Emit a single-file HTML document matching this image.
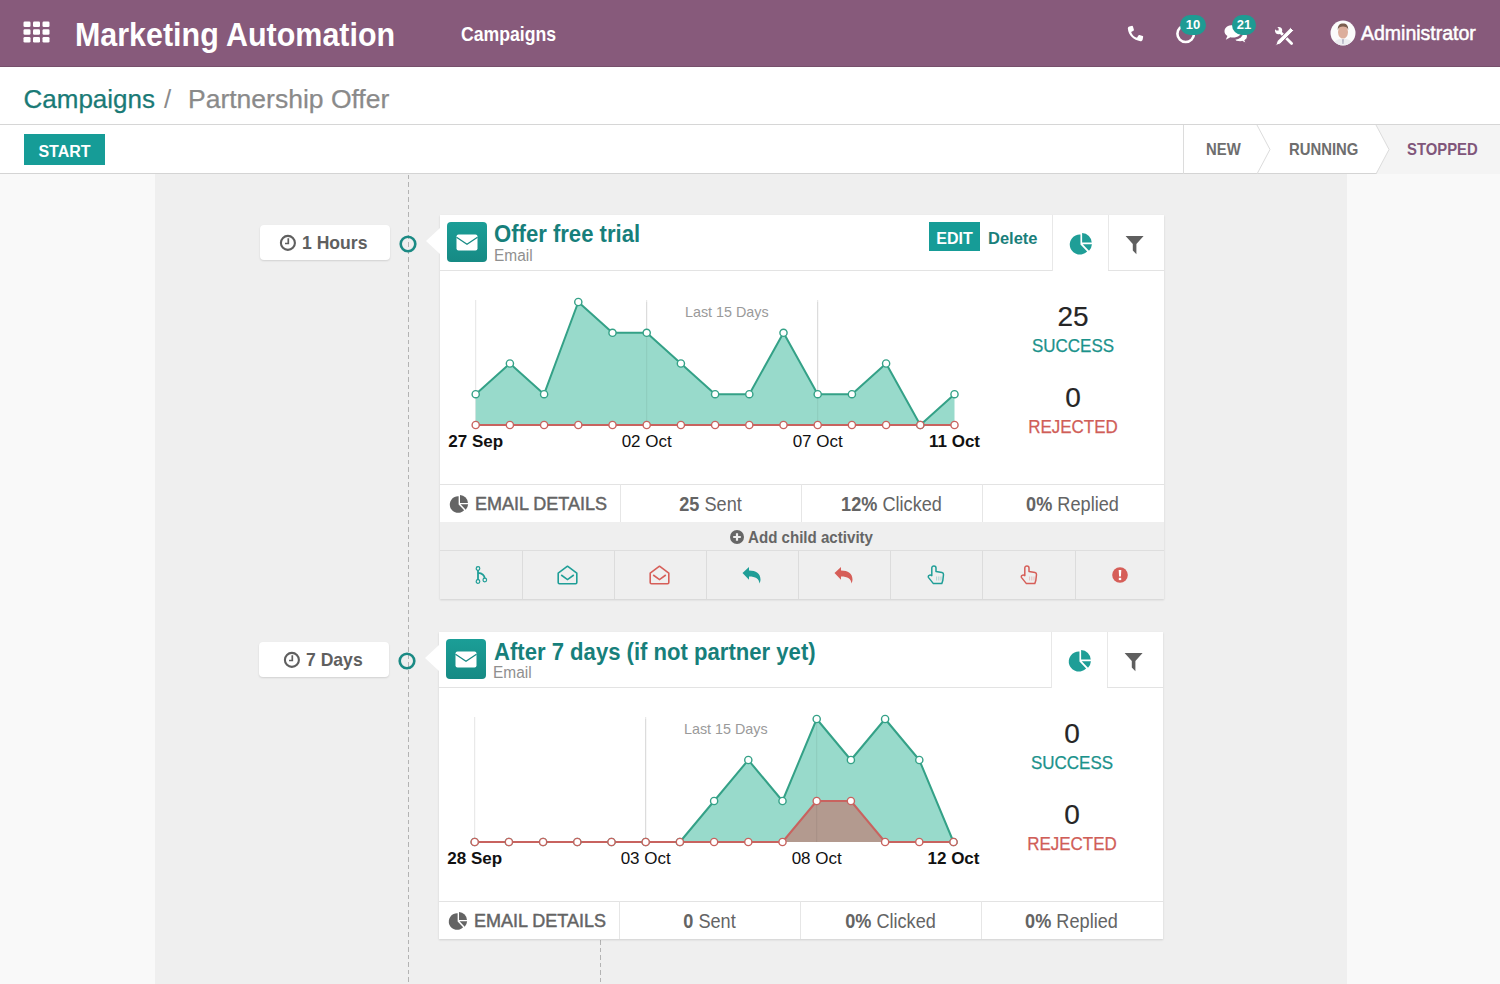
<!DOCTYPE html>
<html><head><meta charset="utf-8">
<style>
*{box-sizing:border-box;margin:0;padding:0}
html,body{width:1500px;height:984px;overflow:hidden;background:#f9f9f9;font-family:"Liberation Sans",sans-serif}
.abs{position:absolute}
svg.abs{overflow:visible}
#nav{position:absolute;left:0;top:0;width:1500px;height:67px;background:#875a7b;border-bottom:1px solid #76506b}
.wt{color:#fff;white-space:nowrap}
#cp{position:absolute;left:0;top:67px;width:1500px;height:107px;background:#fff;border-bottom:1px solid #d4d4d4}
#center{position:absolute;left:155px;top:174px;width:1192px;height:810px;background:#efefef}
.tl{position:absolute;width:1px;background:repeating-linear-gradient(to bottom,#b3b3b3 0,#b3b3b3 4.5px,transparent 4.5px,transparent 7.5px)}
.badge{position:absolute;width:130px;height:35px;background:#fff;border-radius:4px;box-shadow:0 1px 2px rgba(0,0,0,.13);color:#5f5f5f;font-weight:bold;font-size:17.5px;white-space:nowrap}
.dot{position:absolute;width:18px;height:18px;border:3px solid #1a8a84;border-radius:50%;background:#efefef}
.card{position:absolute;width:724px;background:#fff;box-shadow:0 1px 2px rgba(0,0,0,.13)}
.arrow{position:absolute;width:0;height:0;border-top:13px solid transparent;border-bottom:13px solid transparent;border-right:14px solid #fff}
.hdr{position:absolute;left:0;top:0;width:612px;height:56px;border-bottom:1px solid #e2e2e2}
.tab1{position:absolute;left:612px;top:0;width:56px;height:56px;border-left:1px solid #e2e2e2}
.tab2{position:absolute;left:668px;top:0;width:56px;height:56px;border-left:1px solid #e2e2e2;border-bottom:1px solid #e2e2e2}
.micon{position:absolute;width:40px;height:40px;border-radius:4px;background:linear-gradient(to bottom,#1b9e97,#168a84)}
.title{position:absolute;color:#177f7b;font-weight:bold;font-size:22px;line-height:26px;white-space:nowrap}
.sub{position:absolute;color:#8f8f8f;font-size:15.5px;line-height:18px;white-space:nowrap}
.det{position:absolute;height:38px;border-top:1px solid #e2e2e2;background:#fff}
.dc{position:absolute;top:0;height:37px;line-height:37px;border-left:1px solid #e2e2e2;color:#646464;font-size:19px;text-align:center;white-space:nowrap}
.xl{position:absolute;width:80px;text-align:center;font-size:17px;line-height:20px;color:#111;white-space:nowrap}
.l15{position:absolute;font-size:14.3px;line-height:16px;color:#9a9a9a;white-space:nowrap}
.stat{position:absolute;width:130px;text-align:center;white-space:nowrap}
.num{font-size:27px;line-height:30px;color:#262626;-webkit-text-stroke:0.2px #262626}
.lbl{font-size:17px;line-height:20px}
.add{position:absolute;background:#efefef;height:28px;border-bottom:1px solid #dedede}
.ic{position:absolute;top:0;height:49px;border-left:1px solid #dedede;background:#efefef}

</style></head><body>
<div id="nav">
  <svg class="abs" style="left:23px;top:21px" width="28" height="23" viewBox="0 0 28 23">
    <g fill="#fff">
      <rect x="0.5" y="0.5" width="7" height="5.5" rx="1.3"/><rect x="10" y="0.5" width="7" height="5.5" rx="1.3"/><rect x="19.5" y="0.5" width="7" height="5.5" rx="1.3"/>
      <rect x="0.5" y="8.2" width="7" height="5.5" rx="1.3"/><rect x="10" y="8.2" width="7" height="5.5" rx="1.3"/><rect x="19.5" y="8.2" width="7" height="5.5" rx="1.3"/>
      <rect x="0.5" y="16" width="7" height="5.5" rx="1.3"/><rect x="10" y="16" width="7" height="5.5" rx="1.3"/><rect x="19.5" y="16" width="7" height="5.5" rx="1.3"/>
    </g>
  </svg>
  <div id="appname" class="abs wt" style="left:75px;top:14.5px;font-size:34px;font-weight:bold;line-height:38px;transform:scaleX(0.895);transform-origin:0 0">Marketing Automation</div>
  <div id="navcamp" class="abs wt" style="left:461px;top:23px;font-size:19.5px;line-height:22px;font-weight:bold;transform:scaleX(0.905);transform-origin:0 0">Campaigns</div>
  <!-- phone -->
  <svg class="abs" style="left:1127px;top:25px" width="17" height="17" viewBox="0 0 16 16">
    <path fill="#fff" d="M2.2,1.3 L4.8,0.8 C5.2,0.8 5.5,1 5.6,1.3 L6.5,4.4 C6.6,4.8 6.4,5.2 6.1,5.4 L3.9,6.6 C4.7,9.2 6.8,11.3 9.4,12.1 L10.7,9.9 C10.9,9.6 11.3,9.4 11.7,9.5 L14.8,10.4 C15.1,10.5 15.3,10.8 15.2,11.2 L14.7,13.8 C14.5,14.7 13.6,15.3 12.6,15.2 C6.3,14.7 1.3,9.7 0.8,3.4 C0.7,2.4 1.3,1.5 2.2,1.3 Z"/>
  </svg>
  <!-- activity clock -->
  <svg class="abs" style="left:1170px;top:18px" width="32" height="32" viewBox="0 0 32 32">
    <circle cx="15.7" cy="15.7" r="8.3" fill="none" stroke="#fff" stroke-width="2.6"/>
  </svg>
  <div class="abs" style="left:1180px;top:15px;width:26px;height:20px;border-radius:10px;background:#1e9b93"></div>
  <div id="b10" class="abs" style="left:1180px;top:15px;width:26px;height:20px;line-height:20px;text-align:center;color:#fff;font-weight:bold;font-size:13px">10</div>
  <!-- comments -->
  <svg class="abs" style="left:1222px;top:22px" width="28" height="24" viewBox="0 0 28 24">
    <path fill="#fff" d="M11,3 C5.8,3 2.5,5.8 2.5,9.2 C2.5,11.2 3.6,12.9 5.4,14 L3.8,17.8 L8.4,15.3 C9.2,15.5 10.1,15.6 11,15.6 C16.2,15.6 19.5,12.8 19.5,9.3 C19.5,5.8 16.2,3 11,3 Z"/>
    <path fill="#fff" stroke="#875a7b" stroke-width="1.2" d="M20.8,10.2 C20.8,14.3 16.8,17.2 11.8,17.3 C12.9,18.8 15.2,19.8 17.8,19.8 C18.6,19.8 19.3,19.7 20,19.5 L24.6,21.8 L23,18.4 C24.6,17.4 25.6,16 25.6,14.4 C25.6,12.4 23.8,10.8 20.8,10.2 Z"/>
  </svg>
  <div class="abs" style="left:1232px;top:15px;width:24px;height:20px;border-radius:10px;background:#1e9b93"></div>
  <div id="b21" class="abs" style="left:1232px;top:15px;width:24px;height:20px;line-height:20px;text-align:center;color:#fff;font-weight:bold;font-size:13px">21</div>
  <!-- tools -->
  <svg class="abs" style="left:1274px;top:26px" width="21" height="21" viewBox="0 0 21 21">
    <line x1="5.5" y1="5.5" x2="17.6" y2="17.6" stroke="#fff" stroke-width="2.8" stroke-linecap="round"/>
    <circle cx="4.6" cy="4.6" r="3.6" fill="#fff"/>
    <path d="M0.6,2.8 L2.8,0.6 L4.6,2.4 L4.6,4.6 L2.4,4.6 Z" fill="#875a7b"/>
    <path d="M16.6,1.6 L19.6,4.6 L6.2,18 L1.6,19.6 L3.2,15 Z" fill="#fff" stroke="#875a7b" stroke-width="1"/>
  </svg>
  <!-- avatar -->
  <svg class="abs" style="left:1330px;top:20px" width="26" height="26" viewBox="0 0 26 26">
    <defs><clipPath id="av"><circle cx="13" cy="13" r="12.3"/></clipPath></defs>
    <circle cx="13" cy="13" r="12.5" fill="#fbfbfb"/>
    <g clip-path="url(#av)">
      <path d="M3,26 C3,20.5 7.5,19 13,19 C18.5,19 23,20.5 23,26 Z" fill="#ececf0"/>
      <ellipse cx="13" cy="12" rx="5" ry="6.6" fill="#dcae9c"/>
      <path d="M7.8,10 C7.5,5.2 9.8,3.4 13,3.4 C16.2,3.4 18.5,5.2 18.2,10 C17.4,7.4 15.6,6.6 13,6.6 C10.4,6.6 8.6,7.4 7.8,10 Z" fill="#7a5e4e"/>
      <path d="M12.3,19.3 L13.7,19.3 L13.4,24 L12.6,24 Z" fill="#9a9ab0"/>
    </g>
  </svg>
  <div id="admin" class="abs wt" style="left:1361px;top:22px;font-size:19.5px;line-height:22px;-webkit-text-stroke:0.5px #fff">Administrator</div>
</div>
<div id="cp">
  <div id="bc1" class="abs" style="left:23.5px;top:17px;-webkit-text-stroke:0.25px #1a7a76;font-size:26px;line-height:30px;color:#1a7a76;white-space:nowrap">Campaigns</div>
  <div id="bcs" class="abs" style="left:164px;top:17px;font-size:26px;line-height:30px;color:#8a8a8a">/</div>
  <div id="bc2" class="abs" style="left:188px;top:17px;-webkit-text-stroke:0.25px #8a8a8a;font-size:26.5px;line-height:30px;color:#8a8a8a;white-space:nowrap">Partnership Offer</div>
  <div class="abs" style="left:0;top:57px;width:1500px;height:1px;background:#d6d6d6"></div>
  <div class="abs" style="left:24px;top:67px;width:81px;height:31px;background:#169c97"></div>
  <div id="start" class="abs wt" style="left:24px;top:68.5px;width:81px;height:31px;line-height:31px;text-align:center;font-size:16px;font-weight:bold">START</div>
  <!-- statusbar -->
  <svg class="abs" style="left:1183px;top:58px" width="317" height="49" viewBox="0 0 317 49">
    <polygon points="193,0 317,0 317,49 193,49 206,24.5" fill="#f4f4f4"/>
    <line x1="0.5" y1="0" x2="0.5" y2="49" stroke="#dcdcdc" stroke-width="1"/>
    <polyline points="74,0 87,24.5 74,49" fill="none" stroke="#dcdcdc" stroke-width="1"/>
    <polyline points="193,0 206,24.5 193,49" fill="none" stroke="#dcdcdc" stroke-width="1"/>
  </svg>
  <div id="st_new" class="abs" style="left:1206px;top:72.5px;transform:scaleX(0.9);transform-origin:0 0;font-size:16.5px;font-weight:bold;line-height:18px;color:#6e6e6e">NEW</div>
  <div id="st_run" class="abs" style="left:1288.5px;top:72.5px;transform:scaleX(0.9);transform-origin:0 0;font-size:16.5px;font-weight:bold;line-height:18px;color:#6e6e6e">RUNNING</div>
  <div id="st_stop" class="abs" style="left:1406.5px;top:72.5px;transform:scaleX(0.9);transform-origin:0 0;font-size:16.5px;font-weight:bold;line-height:18px;color:#80567a">STOPPED</div>
</div>
<div id="center"></div>
<div class="tl" style="left:408px;top:175px;height:809px"></div>
<div class="tl" style="left:600px;top:940px;height:44px"></div>
<div class="badge" style="left:260px;top:225px"></div>
<svg class="abs" style="left:278.7px;top:234px" width="18" height="18" viewBox="0 0 18 18"><circle cx="8.9" cy="8.9" r="7" fill="none" stroke="#5f5f5f" stroke-width="2.1"/><path d="M9.3,4.3 L9.3,9.5 L6,9.5" fill="none" stroke="#5f5f5f" stroke-width="1.7"/></svg>
<div class="abs" style="left:301.7px;top:232px;font-size:18.5px;line-height:22px;font-weight:bold;color:#5f5f5f;white-space:nowrap;transform:scaleX(0.95);transform-origin:0 0;">1 Hours</div>
<svg class="abs" style="left:397.5px;top:233.5px" width="20" height="20" viewBox="0 0 20 20"><circle cx="10" cy="10" r="7.3" fill="none" stroke="#1b8a84" stroke-width="2.6"/></svg>
<div class="card" style="left:440px;top:215px;height:384px;border-radius:3px 3px 0 0 0 0"></div>
<div class="arrow" style="left:426px;top:228px"></div>
<div class="abs" style="left:440px;top:270px;width:612px;height:1px;background:#e3e3e3"></div>
<div class="abs" style="left:1052px;top:215px;width:1px;height:56px;background:#e8e8e8"></div>
<div class="abs" style="left:1108px;top:215px;width:1px;height:56px;background:#e8e8e8"></div>
<div class="abs" style="left:1108px;top:270px;width:56px;height:1px;background:#e3e3e3"></div>
<div class="micon" style="left:447px;top:222px"></div>
<svg class="abs" style="left:456px;top:234px" width="22" height="17" viewBox="0 0 22 17"><rect x="0.5" y="0.5" width="21" height="16" rx="2" fill="#fff"/><path d="M0.5,3.2 L11,10.2 L21.5,3.2" fill="none" stroke="#168a84" stroke-width="1.3"/></svg>
<div class="abs" style="left:494px;top:220.5px;font-size:23.5px;line-height:26px;font-weight:bold;color:#177f7b;white-space:nowrap;transform:scaleX(0.94);transform-origin:0 0;">Offer free trial</div>
<div class="abs" style="left:493.5px;top:245.5px;font-size:16px;line-height:19px;font-weight:normal;color:#8f8f8f;white-space:nowrap;transform:scaleX(0.965);transform-origin:0 0;">Email</div>
<div class="abs" style="left:929px;top:222px;width:51px;height:29px;background:#169c97"></div>
<div class="abs" style="left:929px;top:222px;width:51px;height:29px;line-height:29px;text-align:center;color:#fff;font-weight:bold;font-size:16px;padding-top:1.5px">EDIT</div>
<div class="abs" style="left:988px;top:227.7px;line-height:20px;color:#1a7f7b;font-weight:bold;font-size:16.5px">Delete</div>
<svg class="abs" style="left:1070px;top:232.5px" width="23" height="23" viewBox="0 0 22 22"><path fill="#1f9e97" d="M10,1.5 L10,11 L16.4,17.6 A9.6,9.6 0 1 1 10,1.5 Z"/><path fill="#1f9e97" d="M11.6,0 A9.4,9.4 0 0 1 20.8,9.2 L11.6,9.2 Z"/><path fill="#1f9e97" d="M12.2,10.8 L21,10.8 A9.8,9.8 0 0 1 18.2,17 Z"/></svg>
<svg class="abs" style="left:1125px;top:235px" width="19" height="20" viewBox="0 0 19 20"><path fill="#5f5f5f" d="M0.6,1 L18.6,1 L11.4,9 L11.4,19.2 L7.8,15.4 L7.8,9 Z"/></svg>
<div class="stat num" style="left:1008px;top:301px;font-size:28px;line-height:31px">25</div>
<div class="stat lbl" style="left:1008px;top:336px;color:#1b928b;font-size:17.5px;transform:scaleX(0.97);-webkit-text-stroke:0.25px #1b928b">SUCCESS</div>
<div class="stat num" style="left:1008px;top:382px;font-size:28px;line-height:31px">0</div>
<div class="stat lbl" style="left:1008px;top:416.5px;color:#d05e58;font-size:17.5px;transform:scaleX(0.97);-webkit-text-stroke:0.25px #d05e58">REJECTED</div>
<div class="abs" style="left:440px;top:484px;width:724px;height:1px;background:#e3e3e3"></div>
<div class="abs" style="left:620px;top:484px;width:1px;height:38px;background:#e6e6e6"></div>
<div class="abs" style="left:801px;top:484px;width:1px;height:38px;background:#e6e6e6"></div>
<div class="abs" style="left:982px;top:484px;width:1px;height:38px;background:#e6e6e6"></div>
<svg class="abs" style="left:450px;top:495px" width="19" height="19" viewBox="0 0 22 22"><path fill="#646464" d="M10,1.5 L10,11 L16.4,17.6 A9.6,9.6 0 1 1 10,1.5 Z"/><path fill="#646464" d="M11.6,0 A9.4,9.4 0 0 1 20.8,9.2 L11.6,9.2 Z"/><path fill="#646464" d="M12.2,10.8 L21,10.8 A9.8,9.8 0 0 1 18.2,17 Z"/></svg>
<div class="abs" style="left:475px;top:493.3px;font-size:18px;line-height:22px;font-weight:normal;color:#646464;white-space:nowrap;-webkit-text-stroke:0.45px #646464;">EMAIL DETAILS</div>
<div class="dc" style="left:620px;width:181px;border-left:none;line-height:22px;top:492.5px;height:22px;font-size:19.5px;transform:scaleX(0.93)"><b>25</b> Sent</div>
<div class="dc" style="left:801px;width:181px;border-left:none;line-height:22px;top:492.5px;height:22px;font-size:19.5px;transform:scaleX(0.93)"><b>12%</b> Clicked</div>
<div class="dc" style="left:982px;width:181px;border-left:none;line-height:22px;top:492.5px;height:22px;font-size:19.5px;transform:scaleX(0.93)"><b>0%</b> Replied</div>
<div class="abs" style="left:440px;top:522px;width:724px;height:77px;background:#efefef"></div>
<div class="abs" style="left:440px;top:550px;width:724px;height:1px;background:#dedede"></div>
<svg class="abs" style="left:730px;top:530px" width="14" height="14" viewBox="0 0 14 14"><circle cx="7" cy="7" r="7" fill="#666"/><path d="M7,3.2 L7,10.8 M3.2,7 L10.8,7" stroke="#efefef" stroke-width="2.2"/></svg>
<div class="abs" style="left:748px;top:526.5px;font-size:16.5px;line-height:20px;font-weight:bold;color:#666;white-space:nowrap;transform:scaleX(0.915);transform-origin:0 0;">Add child activity</div>
<div class="abs" style="left:521.7px;top:551px;width:1px;height:48px;background:#dcdcdc"></div>
<div class="abs" style="left:613.7px;top:551px;width:1px;height:48px;background:#dcdcdc"></div>
<div class="abs" style="left:706.0px;top:551px;width:1px;height:48px;background:#dcdcdc"></div>
<div class="abs" style="left:798.0px;top:551px;width:1px;height:48px;background:#dcdcdc"></div>
<div class="abs" style="left:890.0px;top:551px;width:1px;height:48px;background:#dcdcdc"></div>
<div class="abs" style="left:982.0px;top:551px;width:1px;height:48px;background:#dcdcdc"></div>
<div class="abs" style="left:1075.0px;top:551px;width:1px;height:48px;background:#dcdcdc"></div>
<svg class="abs" style="left:474.9px;top:566.0px" width="13" height="18" viewBox="0 0 13 18"><path d="M3,3.5 L3,14.5 M3,6.8 C6.5,7 9.5,9 9.8,12.8" fill="none" stroke="#1f9e97" stroke-width="1.8"/><circle cx="3" cy="2.5" r="1.8" fill="#efefef" stroke="#1f9e97" stroke-width="1.2"/><circle cx="3" cy="15.5" r="1.8" fill="#efefef" stroke="#1f9e97" stroke-width="1.2"/><circle cx="9.8" cy="14" r="1.8" fill="#efefef" stroke="#1f9e97" stroke-width="1.2"/></svg>
<svg class="abs" style="left:557.2px;top:565.0px" width="21" height="20" viewBox="0 0 21 20"><path d="M1.2,8.2 L10.5,1.2 L19.8,8.2 L19.8,17.6 C19.8,18.3 19.3,18.8 18.6,18.8 L2.4,18.8 C1.7,18.8 1.2,18.3 1.2,17.6 Z" fill="none" stroke="#1f9e97" stroke-width="1.6" stroke-linejoin="round"/><path d="M4.2,10 L10.5,14.6 L16.8,10" fill="none" stroke="#1f9e97" stroke-width="1.6"/></svg>
<svg class="abs" style="left:649.4px;top:565.0px" width="21" height="20" viewBox="0 0 21 20"><path d="M1.2,8.2 L10.5,1.2 L19.8,8.2 L19.8,17.6 C19.8,18.3 19.3,18.8 18.6,18.8 L2.4,18.8 C1.7,18.8 1.2,18.3 1.2,17.6 Z" fill="none" stroke="#d65e58" stroke-width="1.6" stroke-linejoin="round"/><path d="M4.2,10 L10.5,14.6 L16.8,10" fill="none" stroke="#d65e58" stroke-width="1.6"/></svg>
<svg class="abs" style="left:742.0px;top:566.0px" width="20" height="18" viewBox="0 0 20 18"><path fill="#1f9e97" d="M0.5,7 L7,1 L7,4.6 C14,4.6 18.5,7.8 18.5,13.5 C18.5,15 18,16.4 17.3,17.5 C17.5,12.6 13.5,10.4 7,10.4 L7,13.8 Z"/></svg>
<svg class="abs" style="left:834.0px;top:566.0px" width="20" height="18" viewBox="0 0 20 18"><path fill="#d65e58" d="M0.5,7 L7,1 L7,4.6 C14,4.6 18.5,7.8 18.5,13.5 C18.5,15 18,16.4 17.3,17.5 C17.5,12.6 13.5,10.4 7,10.4 L7,13.8 Z"/></svg>
<svg class="abs" style="left:927.0px;top:565.0px" width="18" height="20" viewBox="0 0 18 20"><path d="M4.8,10.6 L4.8,2.9 C4.8,1.7 5.7,0.9 6.9,0.9 C8.1,0.9 9,1.7 9,2.9 L9,6.5 L15,7.6 C16,7.8 16.6,8.6 16.5,9.6 L15.8,15.5 L14.8,18.6 L6.4,18.6 L1.6,12.6 C1,11.8 1.3,10.8 2.1,10.4 C3,9.9 4,10.1 4.8,10.6 Z" fill="none" stroke="#1f9e97" stroke-width="1.5" stroke-linejoin="round"/><path d="M9.6,11.5 L9.6,15.5 M11.8,11.5 L11.8,15.5 M14,11.5 L14,15.5" stroke="#1f9e97" stroke-width="0.8" opacity="0.4"/></svg>
<svg class="abs" style="left:1019.5px;top:565.0px" width="18" height="20" viewBox="0 0 18 20"><path d="M4.8,10.6 L4.8,2.9 C4.8,1.7 5.7,0.9 6.9,0.9 C8.1,0.9 9,1.7 9,2.9 L9,6.5 L15,7.6 C16,7.8 16.6,8.6 16.5,9.6 L15.8,15.5 L14.8,18.6 L6.4,18.6 L1.6,12.6 C1,11.8 1.3,10.8 2.1,10.4 C3,9.9 4,10.1 4.8,10.6 Z" fill="none" stroke="#d65e58" stroke-width="1.5" stroke-linejoin="round"/><path d="M9.6,11.5 L9.6,15.5 M11.8,11.5 L11.8,15.5 M14,11.5 L14,15.5" stroke="#d65e58" stroke-width="0.8" opacity="0.4"/></svg>
<svg class="abs" style="left:1111.5px;top:566.8px" width="16" height="16" viewBox="0 0 16 16"><circle cx="8" cy="8" r="7.8" fill="#d65e58"/><path d="M6.7,3 L9.3,3 L8.9,9.6 L7.1,9.6 Z" fill="#fff"/><rect x="6.8" y="10.8" width="2.4" height="2.3" fill="#fff"/></svg><svg class="abs" style="left:0;top:0" width="1500" height="984" viewBox="0 0 1500 984">
<line x1="475.7" y1="300.0" x2="475.7" y2="425.0" stroke="#e4e4e4" stroke-width="1"/>
<line x1="646.7" y1="300.0" x2="646.7" y2="425.0" stroke="#e4e4e4" stroke-width="1"/>
<line x1="817.7" y1="300.0" x2="817.7" y2="425.0" stroke="#e4e4e4" stroke-width="1"/>
<polygon points="475.7,425 475.7,394.2 509.9,363.5 544.1,394.2 578.3,302.0 612.5,332.8 646.7,332.8 680.9,363.5 715.1,394.2 749.3,394.2 783.5,332.8 817.7,394.2 851.9,394.2 886.1,363.5 920.3,425.0 954.5,394.2 954.5,425" fill="#98dacb"/>
<line x1="646.7" y1="302.0" x2="646.7" y2="425.0" stroke="rgba(0,0,0,0.07)" stroke-width="1"/>
<line x1="817.7" y1="302.0" x2="817.7" y2="425.0" stroke="rgba(0,0,0,0.07)" stroke-width="1"/>
<polyline points="475.7,394.2 509.9,363.5 544.1,394.2 578.3,302.0 612.5,332.8 646.7,332.8 680.9,363.5 715.1,394.2 749.3,394.2 783.5,332.8 817.7,394.2 851.9,394.2 886.1,363.5 920.3,425.0 954.5,394.2" fill="none" stroke="#34a187" stroke-width="2" stroke-linejoin="round"/>
<polyline points="475.7,425.0 509.9,425.0 544.1,425.0 578.3,425.0 612.5,425.0 646.7,425.0 680.9,425.0 715.1,425.0 749.3,425.0 783.5,425.0 817.7,425.0 851.9,425.0 886.1,425.0 920.3,425.0 954.5,425.0" fill="none" stroke="#c8635f" stroke-width="2" stroke-linejoin="round"/>
<circle cx="475.7" cy="394.2" r="3.6" fill="#fff" stroke="#34a187" stroke-width="1.4"/>
<circle cx="509.9" cy="363.5" r="3.6" fill="#fff" stroke="#34a187" stroke-width="1.4"/>
<circle cx="544.1" cy="394.2" r="3.6" fill="#fff" stroke="#34a187" stroke-width="1.4"/>
<circle cx="578.3" cy="302.0" r="3.6" fill="#fff" stroke="#34a187" stroke-width="1.4"/>
<circle cx="612.5" cy="332.8" r="3.6" fill="#fff" stroke="#34a187" stroke-width="1.4"/>
<circle cx="646.7" cy="332.8" r="3.6" fill="#fff" stroke="#34a187" stroke-width="1.4"/>
<circle cx="680.9" cy="363.5" r="3.6" fill="#fff" stroke="#34a187" stroke-width="1.4"/>
<circle cx="715.1" cy="394.2" r="3.6" fill="#fff" stroke="#34a187" stroke-width="1.4"/>
<circle cx="749.3" cy="394.2" r="3.6" fill="#fff" stroke="#34a187" stroke-width="1.4"/>
<circle cx="783.5" cy="332.8" r="3.6" fill="#fff" stroke="#34a187" stroke-width="1.4"/>
<circle cx="817.7" cy="394.2" r="3.6" fill="#fff" stroke="#34a187" stroke-width="1.4"/>
<circle cx="851.9" cy="394.2" r="3.6" fill="#fff" stroke="#34a187" stroke-width="1.4"/>
<circle cx="886.1" cy="363.5" r="3.6" fill="#fff" stroke="#34a187" stroke-width="1.4"/>
<circle cx="920.3" cy="425.0" r="3.6" fill="#fff" stroke="#34a187" stroke-width="1.4"/>
<circle cx="954.5" cy="394.2" r="3.6" fill="#fff" stroke="#34a187" stroke-width="1.4"/>
<circle cx="475.7" cy="425.0" r="3.6" fill="#fff" stroke="#c8635f" stroke-width="1.4"/>
<circle cx="509.9" cy="425.0" r="3.6" fill="#fff" stroke="#c8635f" stroke-width="1.4"/>
<circle cx="544.1" cy="425.0" r="3.6" fill="#fff" stroke="#c8635f" stroke-width="1.4"/>
<circle cx="578.3" cy="425.0" r="3.6" fill="#fff" stroke="#c8635f" stroke-width="1.4"/>
<circle cx="612.5" cy="425.0" r="3.6" fill="#fff" stroke="#c8635f" stroke-width="1.4"/>
<circle cx="646.7" cy="425.0" r="3.6" fill="#fff" stroke="#c8635f" stroke-width="1.4"/>
<circle cx="680.9" cy="425.0" r="3.6" fill="#fff" stroke="#c8635f" stroke-width="1.4"/>
<circle cx="715.1" cy="425.0" r="3.6" fill="#fff" stroke="#c8635f" stroke-width="1.4"/>
<circle cx="749.3" cy="425.0" r="3.6" fill="#fff" stroke="#c8635f" stroke-width="1.4"/>
<circle cx="783.5" cy="425.0" r="3.6" fill="#fff" stroke="#c8635f" stroke-width="1.4"/>
<circle cx="817.7" cy="425.0" r="3.6" fill="#fff" stroke="#c8635f" stroke-width="1.4"/>
<circle cx="851.9" cy="425.0" r="3.6" fill="#fff" stroke="#c8635f" stroke-width="1.4"/>
<circle cx="886.1" cy="425.0" r="3.6" fill="#fff" stroke="#c8635f" stroke-width="1.4"/>
<circle cx="920.3" cy="425.0" r="3.6" fill="#fff" stroke="#c8635f" stroke-width="1.4"/>
<circle cx="954.5" cy="425.0" r="3.6" fill="#fff" stroke="#c8635f" stroke-width="1.4"/>
</svg>
<div class="xl" style="left:435.7px;top:432px;font-weight:bold">27 Sep</div>
<div class="xl" style="left:606.7px;top:432px;font-weight:normal">02 Oct</div>
<div class="xl" style="left:777.7px;top:432px;font-weight:normal">07 Oct</div>
<div class="xl" style="left:914.5px;top:432px;font-weight:bold">11 Oct</div>
<div class="abs" style="left:685px;top:302.5px;font-size:15px;line-height:18px;font-weight:normal;color:#9a9a9a;white-space:nowrap;transform:scaleX(0.955);transform-origin:0 0;">Last 15 Days</div><div class="badge" style="left:259px;top:642px"></div>
<svg class="abs" style="left:282.8px;top:651px" width="18" height="18" viewBox="0 0 18 18"><circle cx="8.9" cy="8.9" r="7" fill="none" stroke="#5f5f5f" stroke-width="2.1"/><path d="M9.3,4.3 L9.3,9.5 L6,9.5" fill="none" stroke="#5f5f5f" stroke-width="1.7"/></svg>
<div class="abs" style="left:305.8px;top:649px;font-size:18.5px;line-height:22px;font-weight:bold;color:#5f5f5f;white-space:nowrap;transform:scaleX(0.95);transform-origin:0 0;">7 Days</div>
<svg class="abs" style="left:397px;top:651px" width="20" height="20" viewBox="0 0 20 20"><circle cx="10" cy="10" r="7.3" fill="none" stroke="#1b8a84" stroke-width="2.6"/></svg>
<div class="card" style="left:439px;top:632px;height:307px;border-radius:3px 3px 0 0 3px 3px"></div>
<div class="arrow" style="left:425px;top:645px"></div>
<div class="abs" style="left:439px;top:687px;width:612px;height:1px;background:#e3e3e3"></div>
<div class="abs" style="left:1051px;top:632px;width:1px;height:56px;background:#e8e8e8"></div>
<div class="abs" style="left:1107px;top:632px;width:1px;height:56px;background:#e8e8e8"></div>
<div class="abs" style="left:1107px;top:687px;width:56px;height:1px;background:#e3e3e3"></div>
<div class="micon" style="left:446px;top:639px"></div>
<svg class="abs" style="left:455px;top:651px" width="22" height="17" viewBox="0 0 22 17"><rect x="0.5" y="0.5" width="21" height="16" rx="2" fill="#fff"/><path d="M0.5,3.2 L11,10.2 L21.5,3.2" fill="none" stroke="#168a84" stroke-width="1.3"/></svg>
<div class="abs" style="left:493.5px;top:638.5px;font-size:23.5px;line-height:26px;font-weight:bold;color:#177f7b;white-space:nowrap;transform:scaleX(0.94);transform-origin:0 0;">After 7 days (if not partner yet)</div>
<div class="abs" style="left:492.5px;top:662.5px;font-size:16px;line-height:19px;font-weight:normal;color:#8f8f8f;white-space:nowrap;transform:scaleX(0.965);transform-origin:0 0;">Email</div>
<svg class="abs" style="left:1069px;top:649.5px" width="23" height="23" viewBox="0 0 22 22"><path fill="#1f9e97" d="M10,1.5 L10,11 L16.4,17.6 A9.6,9.6 0 1 1 10,1.5 Z"/><path fill="#1f9e97" d="M11.6,0 A9.4,9.4 0 0 1 20.8,9.2 L11.6,9.2 Z"/><path fill="#1f9e97" d="M12.2,10.8 L21,10.8 A9.8,9.8 0 0 1 18.2,17 Z"/></svg>
<svg class="abs" style="left:1124px;top:652px" width="19" height="20" viewBox="0 0 19 20"><path fill="#5f5f5f" d="M0.6,1 L18.6,1 L11.4,9 L11.4,19.2 L7.8,15.4 L7.8,9 Z"/></svg>
<div class="stat num" style="left:1007px;top:718px;font-size:28px;line-height:31px">0</div>
<div class="stat lbl" style="left:1007px;top:753px;color:#1b928b;font-size:17.5px;transform:scaleX(0.97);-webkit-text-stroke:0.25px #1b928b">SUCCESS</div>
<div class="stat num" style="left:1007px;top:799px;font-size:28px;line-height:31px">0</div>
<div class="stat lbl" style="left:1007px;top:833.5px;color:#d05e58;font-size:17.5px;transform:scaleX(0.97);-webkit-text-stroke:0.25px #d05e58">REJECTED</div>
<div class="abs" style="left:439px;top:901px;width:724px;height:1px;background:#e3e3e3"></div>
<div class="abs" style="left:619px;top:901px;width:1px;height:38px;background:#e6e6e6"></div>
<div class="abs" style="left:800px;top:901px;width:1px;height:38px;background:#e6e6e6"></div>
<div class="abs" style="left:981px;top:901px;width:1px;height:38px;background:#e6e6e6"></div>
<svg class="abs" style="left:449px;top:912px" width="19" height="19" viewBox="0 0 22 22"><path fill="#646464" d="M10,1.5 L10,11 L16.4,17.6 A9.6,9.6 0 1 1 10,1.5 Z"/><path fill="#646464" d="M11.6,0 A9.4,9.4 0 0 1 20.8,9.2 L11.6,9.2 Z"/><path fill="#646464" d="M12.2,10.8 L21,10.8 A9.8,9.8 0 0 1 18.2,17 Z"/></svg>
<div class="abs" style="left:474px;top:910.3px;font-size:18px;line-height:22px;font-weight:normal;color:#646464;white-space:nowrap;-webkit-text-stroke:0.45px #646464;">EMAIL DETAILS</div>
<div class="dc" style="left:619px;width:181px;border-left:none;line-height:22px;top:909.5px;height:22px;font-size:19.5px;transform:scaleX(0.93)"><b>0</b> Sent</div>
<div class="dc" style="left:800px;width:181px;border-left:none;line-height:22px;top:909.5px;height:22px;font-size:19.5px;transform:scaleX(0.93)"><b>0%</b> Clicked</div>
<div class="dc" style="left:981px;width:181px;border-left:none;line-height:22px;top:909.5px;height:22px;font-size:19.5px;transform:scaleX(0.93)"><b>0%</b> Replied</div><svg class="abs" style="left:0;top:0" width="1500" height="984" viewBox="0 0 1500 984">
<line x1="474.7" y1="717.0" x2="474.7" y2="842.0" stroke="#e4e4e4" stroke-width="1"/>
<line x1="645.7" y1="717.0" x2="645.7" y2="842.0" stroke="#e4e4e4" stroke-width="1"/>
<line x1="816.7" y1="717.0" x2="816.7" y2="842.0" stroke="#e4e4e4" stroke-width="1"/>
<polygon points="474.7,842 474.7,842.0 508.9,842.0 543.1,842.0 577.3,842.0 611.5,842.0 645.7,842.0 679.9,842.0 714.1,801.0 748.3,760.0 782.5,801.0 816.7,719.0 850.9,760.0 885.1,719.0 919.3,760.0 953.5,842.0 953.5,842" fill="#98dacb"/>
<polygon points="474.7,842 474.7,842.0 508.9,842.0 543.1,842.0 577.3,842.0 611.5,842.0 645.7,842.0 679.9,842.0 714.1,842.0 748.3,842.0 782.5,842.0 816.7,801.0 850.9,801.0 885.1,842.0 919.3,842.0 953.5,842.0 953.5,842" fill="#b39a8f"/>
<line x1="645.7" y1="719.0" x2="645.7" y2="842.0" stroke="rgba(0,0,0,0.07)" stroke-width="1"/>
<line x1="816.7" y1="719.0" x2="816.7" y2="842.0" stroke="rgba(0,0,0,0.07)" stroke-width="1"/>
<polyline points="474.7,842.0 508.9,842.0 543.1,842.0 577.3,842.0 611.5,842.0 645.7,842.0 679.9,842.0 714.1,801.0 748.3,760.0 782.5,801.0 816.7,719.0 850.9,760.0 885.1,719.0 919.3,760.0 953.5,842.0" fill="none" stroke="#34a187" stroke-width="2" stroke-linejoin="round"/>
<polyline points="474.7,842.0 508.9,842.0 543.1,842.0 577.3,842.0 611.5,842.0 645.7,842.0 679.9,842.0 714.1,842.0 748.3,842.0 782.5,842.0 816.7,801.0 850.9,801.0 885.1,842.0 919.3,842.0 953.5,842.0" fill="none" stroke="#c8635f" stroke-width="2" stroke-linejoin="round"/>
<circle cx="474.7" cy="842.0" r="3.6" fill="#fff" stroke="#34a187" stroke-width="1.4"/>
<circle cx="508.9" cy="842.0" r="3.6" fill="#fff" stroke="#34a187" stroke-width="1.4"/>
<circle cx="543.1" cy="842.0" r="3.6" fill="#fff" stroke="#34a187" stroke-width="1.4"/>
<circle cx="577.3" cy="842.0" r="3.6" fill="#fff" stroke="#34a187" stroke-width="1.4"/>
<circle cx="611.5" cy="842.0" r="3.6" fill="#fff" stroke="#34a187" stroke-width="1.4"/>
<circle cx="645.7" cy="842.0" r="3.6" fill="#fff" stroke="#34a187" stroke-width="1.4"/>
<circle cx="679.9" cy="842.0" r="3.6" fill="#fff" stroke="#34a187" stroke-width="1.4"/>
<circle cx="714.1" cy="801.0" r="3.6" fill="#fff" stroke="#34a187" stroke-width="1.4"/>
<circle cx="748.3" cy="760.0" r="3.6" fill="#fff" stroke="#34a187" stroke-width="1.4"/>
<circle cx="782.5" cy="801.0" r="3.6" fill="#fff" stroke="#34a187" stroke-width="1.4"/>
<circle cx="816.7" cy="719.0" r="3.6" fill="#fff" stroke="#34a187" stroke-width="1.4"/>
<circle cx="850.9" cy="760.0" r="3.6" fill="#fff" stroke="#34a187" stroke-width="1.4"/>
<circle cx="885.1" cy="719.0" r="3.6" fill="#fff" stroke="#34a187" stroke-width="1.4"/>
<circle cx="919.3" cy="760.0" r="3.6" fill="#fff" stroke="#34a187" stroke-width="1.4"/>
<circle cx="953.5" cy="842.0" r="3.6" fill="#fff" stroke="#34a187" stroke-width="1.4"/>
<circle cx="474.7" cy="842.0" r="3.6" fill="#fff" stroke="#c8635f" stroke-width="1.4"/>
<circle cx="508.9" cy="842.0" r="3.6" fill="#fff" stroke="#c8635f" stroke-width="1.4"/>
<circle cx="543.1" cy="842.0" r="3.6" fill="#fff" stroke="#c8635f" stroke-width="1.4"/>
<circle cx="577.3" cy="842.0" r="3.6" fill="#fff" stroke="#c8635f" stroke-width="1.4"/>
<circle cx="611.5" cy="842.0" r="3.6" fill="#fff" stroke="#c8635f" stroke-width="1.4"/>
<circle cx="645.7" cy="842.0" r="3.6" fill="#fff" stroke="#c8635f" stroke-width="1.4"/>
<circle cx="679.9" cy="842.0" r="3.6" fill="#fff" stroke="#c8635f" stroke-width="1.4"/>
<circle cx="714.1" cy="842.0" r="3.6" fill="#fff" stroke="#c8635f" stroke-width="1.4"/>
<circle cx="748.3" cy="842.0" r="3.6" fill="#fff" stroke="#c8635f" stroke-width="1.4"/>
<circle cx="782.5" cy="842.0" r="3.6" fill="#fff" stroke="#c8635f" stroke-width="1.4"/>
<circle cx="816.7" cy="801.0" r="3.6" fill="#fff" stroke="#c8635f" stroke-width="1.4"/>
<circle cx="850.9" cy="801.0" r="3.6" fill="#fff" stroke="#c8635f" stroke-width="1.4"/>
<circle cx="885.1" cy="842.0" r="3.6" fill="#fff" stroke="#c8635f" stroke-width="1.4"/>
<circle cx="919.3" cy="842.0" r="3.6" fill="#fff" stroke="#c8635f" stroke-width="1.4"/>
<circle cx="953.5" cy="842.0" r="3.6" fill="#fff" stroke="#c8635f" stroke-width="1.4"/>
</svg>
<div class="xl" style="left:434.7px;top:849px;font-weight:bold">28 Sep</div>
<div class="xl" style="left:605.7px;top:849px;font-weight:normal">03 Oct</div>
<div class="xl" style="left:776.7px;top:849px;font-weight:normal">08 Oct</div>
<div class="xl" style="left:913.5px;top:849px;font-weight:bold">12 Oct</div>
<div class="abs" style="left:684px;top:719.5px;font-size:15px;line-height:18px;font-weight:normal;color:#9a9a9a;white-space:nowrap;transform:scaleX(0.955);transform-origin:0 0;">Last 15 Days</div>
</body></html>
